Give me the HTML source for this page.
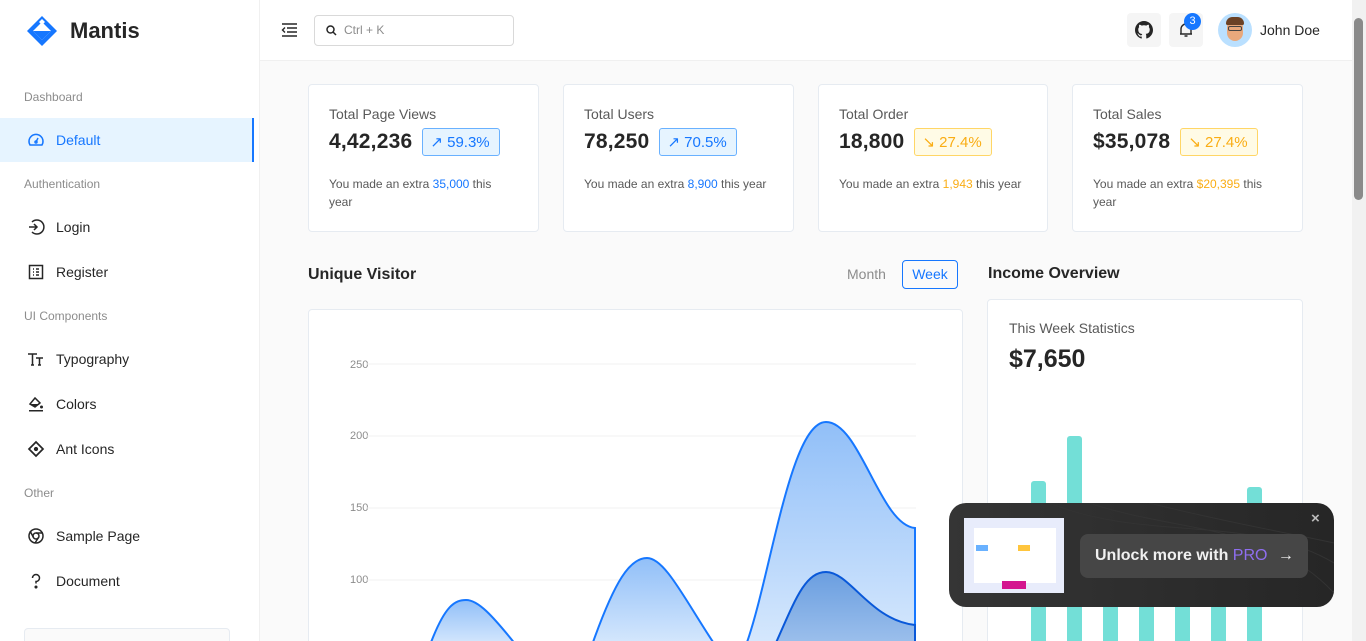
<!DOCTYPE html>
<html style="overflow:hidden;height:641px"><head><meta charset="utf-8"><style>
*{box-sizing:border-box;margin:0;padding:0}
body{width:1366px;height:641px;overflow:hidden;background:#fafafa;font-family:"Liberation Sans",sans-serif;color:#262626;position:relative}
.side{position:absolute;left:0;top:0;width:260px;height:641px;background:#fff;border-right:1px solid #f0f0f0;overflow:hidden}
.logo{position:absolute;left:26px;top:15px;display:flex;align-items:center}
.logo span{font-size:22px;font-weight:bold;margin-left:12px;color:#262626}
.grp{position:absolute;left:24px;font-size:12px;color:#8c8c8c}
.item{position:absolute;left:0;width:259px;height:44px;display:flex;align-items:center;padding-left:27px;font-size:14px;color:#262626}
.item svg{width:18px;height:18px;margin-right:11px}
.item.act{background:#e6f4ff;color:#1677ff;border-right:2px solid #1677ff;width:254px}
.hdr{position:absolute;left:260px;top:0;width:1092px;height:61px;background:#fff;border-bottom:1px solid #f0f0f0}
.search{position:absolute;left:54px;top:15px;width:200px;height:31px;border:1px solid #d9d9d9;border-radius:4px;font-size:12px;color:#8c8c8c;padding:7px 0 0 29px}
.ibtn{position:absolute;top:13px;width:34px;height:34px;background:#f5f5f5;border-radius:4px;display:flex;align-items:center;justify-content:center}
.card{position:absolute;top:84px;height:148px;background:#fff;border:1px solid #e6ebf1;border-radius:4px;padding:20px}
.card .t{font-size:14px;color:#595959;margin-top:1px}
.card .v{font-size:21px;font-weight:bold;display:flex;align-items:center;margin-top:6px;letter-spacing:.2px}
.chip{margin-left:10px;font-size:15px;border:1px solid;border-radius:3px;height:28px;padding:0 9px 0 7px;display:flex;align-items:center;font-weight:normal;letter-spacing:0}
.chip.b{color:#1677ff;border-color:#69b1ff;background:#e6f4ff}
.chip.y{color:#faad14;border-color:#ffd666;background:#fffbe6}
.card .s{font-size:12px;color:#595959;margin-top:19px;line-height:18px}
.b1{color:#1677ff}.y1{color:#faad14}
.h5{position:absolute;font-size:16px;font-weight:bold;color:#262626}
.panel{position:absolute;background:#fff;border:1px solid #e6ebf1;border-radius:4px}
.yl{position:absolute;left:350px;font-size:11px;color:#8c8c8c}
.bar{position:absolute;width:15px;background:#73dfd7;border-radius:3px 3px 0 0;bottom:0}
</style></head><body>
<div class="side">
 <div class="logo"><svg width="32" height="32" viewBox="0 0 32 32"><path d="M16 1 L31 16 L16 31 L1 16Z" fill="#1677ff"/><path d="M16 7 L25 16 L16 25 L7 16Z" fill="#fff"/><path d="M7 16 L25 16 L16 25Z" fill="#1677ff"/><path d="M16 4 L19 7 L16 10 L13 7Z" fill="#fff"/></svg><span>Mantis</span></div>
 <div class="grp" style="top:90px">Dashboard</div>
 <div class="item act" style="top:118px"><svg viewBox="0 0 18 18" fill="none" stroke="#1677ff" stroke-width="1.5"><path d="M3 14 A7 7 0 1 1 15 14Z"/><path d="M9 11 L11 7"/><circle cx="9" cy="11" r="1"/></svg>Default</div>
 <div class="grp" style="top:177px">Authentication</div>
 <div class="item" style="top:205px"><svg viewBox="0 0 18 18" fill="none" stroke="#262626" stroke-width="1.5"><path d="M5 4 A7 7 0 1 1 5 14"/><path d="M2 9 H10 M7 6 L10 9 L7 12"/></svg>Login</div>
 <div class="item" style="top:250px"><svg viewBox="0 0 18 18" fill="none" stroke="#262626" stroke-width="1.5"><rect x="2.5" y="2.5" width="13" height="13"/><path d="M6 6h1M9 6h3M6 9h1M9 9h3M6 12h1M9 12h3"/></svg>Register</div>
 <div class="grp" style="top:309px">UI Components</div>
 <div class="item" style="top:337px"><svg viewBox="0 0 18 18" fill="none" stroke="#262626" stroke-width="1.5"><path d="M1 4h9M5.5 4v11M4 15h3M9 8h7M12.5 8v7M11 15h3"/></svg>Typography</div>
 <div class="item" style="top:382px"><svg viewBox="0 0 18 18" fill="#262626"><path d="M3 9 L8 3 L13 8 L8 12Z" fill="none" stroke="#262626" stroke-width="1.5"/><path d="M4 9h9l-5 3z"/><circle cx="14.5" cy="12" r="1.5"/><rect x="2" y="15" width="14" height="1.5"/></svg>Colors</div>
 <div class="item" style="top:427px"><svg viewBox="0 0 18 18" fill="none" stroke="#262626" stroke-width="1.7"><path d="M9 2 L16 9 L9 16 L2 9Z"/><circle cx="9" cy="9" r="1.3" fill="#262626"/></svg>Ant Icons</div>
 <div class="grp" style="top:486px">Other</div>
 <div class="item" style="top:514px"><svg viewBox="0 0 18 18" fill="none" stroke="#262626" stroke-width="1.5"><circle cx="9" cy="9" r="7"/><circle cx="9" cy="9" r="3"/><path d="M9 6h7M6.5 10.5 L3 4M11.5 10.5 L8 16"/></svg>Sample Page</div>
 <div class="item" style="top:559px"><svg viewBox="0 0 18 18" fill="none" stroke="#262626" stroke-width="1.5"><path d="M5.5 6 A3.5 3.5 0 1 1 9 9.5 V11.5"/><circle cx="9" cy="15" r=".8" fill="#262626"/></svg>Document</div>
 <div style="position:absolute;left:24px;top:628px;width:206px;height:30px;border:1px solid #e6ebf1;border-radius:4px;background:#fafafa"></div>
</div>
<div class="hdr">
 <svg style="position:absolute;left:21px;top:23px" width="16" height="14" viewBox="0 0 16 14" stroke="#262626" stroke-width="1.4" fill="none"><path d="M1 1h15M6 5h10M6 9h10M1 13h15M4 4.5 L1.5 7 L4 9.5"/></svg>
 <div class="search"><svg style="position:absolute;left:11px;top:9px" width="11" height="11" viewBox="0 0 11 11" fill="none" stroke="#262626" stroke-width="1.5"><circle cx="4.5" cy="4.5" r="3.5"/><path d="M7 7l3 3"/></svg>Ctrl + K</div>
 <div class="ibtn" style="left:867px"><svg width="18" height="18" viewBox="0 0 16 16"><path fill="#262626" d="M8 0C3.6 0 0 3.6 0 8c0 3.5 2.3 6.5 5.5 7.6.4.1.5-.2.5-.4v-1.4c-2.200.5-2.700-1-2.700-1-.4-.9-.9-1.200-.9-1.200-.7-.5.1-.5.1-.5.8.1 1.200.8 1.200.8.7 1.200 1.900.9 2.300.7.1-.5.3-.9.5-1.100-1.800-.2-3.600-.9-3.600-4 0-.9.3-1.600.8-2.100-.1-.2-.4-1 .1-2.100 0 0 .7-.2 2.200.8.6-.2 1.300-.3 2-.3s1.400.1 2 .3c1.500-1 2.200-.8 2.200-.8.4 1.100.2 1.900.1 2.100.5.6.8 1.300.8 2.100 0 3.100-1.900 3.700-3.600 3.900.3.3.5.8.5 1.500v2.200c0 .2.1.5.6.4C13.700 14.500 16 11.500 16 8c0-4.400-3.600-8-8-8z"/></svg></div>
 <div class="ibtn" style="left:909px"><svg width="16" height="16" viewBox="0 0 16 16" fill="none" stroke="#262626" stroke-width="1.4"><path d="M3 12V7a5 5 0 0 1 10 0v5zM2 12h12M6.5 14h3"/></svg></div>
 <div style="position:absolute;left:924px;top:13px;width:17px;height:17px;border-radius:50%;background:#1677ff;color:#fff;font-size:11px;text-align:center;line-height:17px">3</div>
 <div style="position:absolute;left:958px;top:13px;width:34px;height:34px;border-radius:50%;background:#bae0ff;overflow:hidden"><div style="position:absolute;left:9px;top:6px;width:16px;height:22px;border-radius:8px;background:#e8a87c"></div><div style="position:absolute;left:8px;top:4px;width:18px;height:8px;border-radius:8px 8px 2px 2px;background:#6b4226"></div><div style="position:absolute;left:10px;top:13px;width:14px;height:5px;border:1px solid #444;border-radius:2px"></div></div>
 <div style="position:absolute;left:1000px;top:22px;font-size:14px;font-weight:500">John Doe</div>
</div>
<div style="position:absolute;left:1352px;top:0;width:14px;height:641px;background:#f1f1f1"><div style="position:absolute;left:2px;top:18px;width:9px;height:182px;background:#8a8a8a;border-radius:5px"></div></div>

<div class="card" style="left:308px;width:231px"><div class="t">Total Page Views</div><div class="v">4,42,236<span class="chip b">↗ 59.3%</span></div><div class="s">You made an extra <span class="b1">35,000</span> this year</div></div>
<div class="card" style="left:563px;width:231px"><div class="t">Total Users</div><div class="v">78,250<span class="chip b">↗ 70.5%</span></div><div class="s">You made an extra <span class="b1">8,900</span> this year</div></div>
<div class="card" style="left:818px;width:230px"><div class="t">Total Order</div><div class="v">18,800<span class="chip y">↘ 27.4%</span></div><div class="s">You made an extra <span class="y1">1,943</span> this year</div></div>
<div class="card" style="left:1072px;width:231px"><div class="t">Total Sales</div><div class="v">$35,078<span class="chip y">↘ 27.4%</span></div><div class="s">You made an extra <span class="y1">$20,395</span> this year</div></div>

<div class="h5" style="left:308px;top:266px">Unique Visitor</div>
<div style="position:absolute;left:847px;top:266px;font-size:14px;color:#8c8c8c">Month</div>
<div style="position:absolute;left:902px;top:260px;width:56px;height:29px;border:1px solid #1677ff;border-radius:4px;color:#1677ff;font-size:14px;text-align:center;line-height:27px">Week</div>
<div class="panel" style="left:308px;top:309px;width:655px;height:340px"></div>
<div class="yl" style="top:359px">250</div><div class="yl" style="top:430px">200</div><div class="yl" style="top:502px">150</div><div class="yl" style="top:574px">100</div>
<svg style="position:absolute;left:0;top:0" width="1366" height="641">
<defs><linearGradient id="g1" x1="0" y1="0" x2="0" y2="1"><stop offset="0" stop-color="#91bff8"/><stop offset="1" stop-color="#d6e8fd"/></linearGradient><linearGradient id="g2" x1="0" y1="0" x2="0" y2="1"><stop offset="0" stop-color="#6a9ee0"/><stop offset="1" stop-color="#9dc0ec"/></linearGradient></defs>
<g stroke="#f0f0f0"><path d="M366 364H916M366 436H916M366 508H916M366 580H916"/></g>
<path d="M430 645 C445 605 455 600 466 600 C478 600 492 615 516 645Z" fill="url(#g1)" stroke="#1677ff" stroke-width="2"/>
<path d="M592 645 C615 580 630 558 647 558 C665 558 685 600 715 645Z" fill="url(#g1)" stroke="#1677ff" stroke-width="2"/>
<path d="M746 645 C770 580 790 422 826 422 C860 422 880 525 915 528 V645Z" fill="url(#g1)" stroke="#1677ff" stroke-width="2"/>
<path d="M775 645 C795 600 805 572 826 572 C850 572 870 620 915 625 V645Z" fill="url(#g2)" stroke="#0958d9" stroke-width="2"/>
</svg>

<div class="h5" style="left:988px;top:265px">Income Overview</div>
<div class="panel" style="left:987px;top:299px;width:316px;height:350px;overflow:hidden">
 <div style="position:absolute;left:21px;top:20px;font-size:14px;color:#595959">This Week Statistics</div>
 <div style="position:absolute;left:21px;top:45px;font-size:25px;font-weight:bold">$7,650</div>
 <div class="bar" style="left:43px;top:181px"></div>
 <div class="bar" style="left:79px;top:136px"></div>
 <div class="bar" style="left:115px;top:230px"></div>
 <div class="bar" style="left:151px;top:230px"></div>
 <div class="bar" style="left:187px;top:230px"></div>
 <div class="bar" style="left:223px;top:230px"></div>
 <div class="bar" style="left:259px;top:187px"></div>
</div>

<div style="position:absolute;left:949px;top:503px;width:385px;height:104px;border-radius:17px;background:linear-gradient(90deg,#353535,#262626);overflow:hidden">
 <svg style="position:absolute;left:0;top:0" width="385" height="104" fill="none" stroke="#333"><path d="M100 0 C200 40 300 10 385 60M140 0 C230 30 320 20 385 90M200 0 C280 20 340 30 385 40"/></svg>
 <div style="position:absolute;left:15px;top:15px;width:100px;height:75px;background:#e8ecfb"><div style="position:absolute;left:10px;top:10px;width:82px;height:55px;background:#fff"></div><div style="position:absolute;left:12px;top:27px;width:12px;height:6px;background:#69b1ff"></div><div style="position:absolute;left:54px;top:27px;width:12px;height:6px;background:#ffc53d"></div><div style="position:absolute;left:38px;top:63px;width:24px;height:8px;background:#d4168f"></div></div>
 <div style="position:absolute;left:131px;top:31px;width:228px;height:44px;border-radius:8px;background:#464646;color:#f0f0f0;font-size:16px;font-weight:bold;line-height:44px;padding-left:15px">Unlock more with <span style="color:#8f6ef0;font-weight:normal">PRO</span> <span style="margin-left:6px;font-weight:normal">→</span></div>
 <div style="position:absolute;left:362px;top:7px;color:#bbb;font-size:15px;font-weight:bold">×</div>
</div>
</body></html>
